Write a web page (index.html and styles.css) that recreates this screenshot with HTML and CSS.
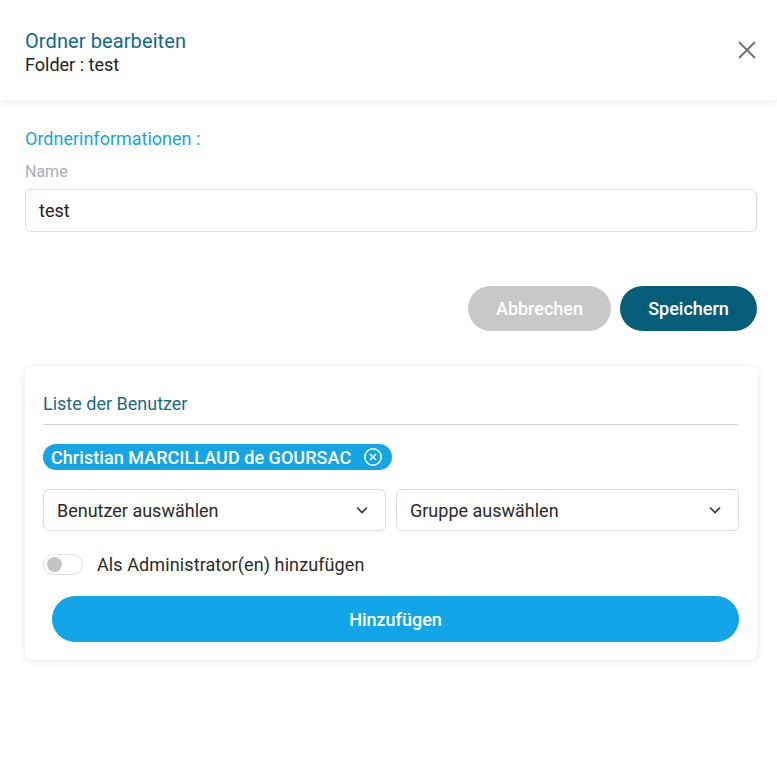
FILE: index.html
```html
<!DOCTYPE html>
<html lang="de">
<head>
<meta charset="utf-8">
<title>Ordner bearbeiten</title>
<link rel="stylesheet" href="styles.css">
</head>
<body>
<div class="modal">
  <header class="modal-header">
    <div class="titles">
      <div class="title">Ordner bearbeiten</div>
      <div class="subtitle">Folder : test</div>
    </div>
    <button class="close" aria-label="Schließen">
      <svg width="20" height="20" viewBox="0 0 20 20"><path d="M2 2L18 18M18 2L2 18" stroke="#6f6f6f" stroke-width="1.8" fill="none"/></svg>
    </button>
  </header>
  <main class="modal-body">
    <div class="section-title">Ordnerinformationen :</div>
    <label class="field-label">Name</label>
    <div class="input">test</div>
    <div class="actions">
      <button class="btn btn-cancel">Abbrechen</button>
      <button class="btn btn-save">Speichern</button>
    </div>
    <section class="card">
      <div class="card-title">Liste der Benutzer</div>
      <div class="chips">
        <span class="chip">Christian MARCILLAUD de GOURSAC
          <svg width="20" height="20" viewBox="0 0 20 20"><circle cx="10" cy="10" r="8.2" stroke="#fff" stroke-width="1.6" fill="none"/><path d="M7 7L13 13M13 7L7 13" stroke="#fff" stroke-width="1.6"/></svg>
        </span>
      </div>
      <div class="selects">
        <div class="select"><span>Benutzer auswählen</span>
          <svg width="14" height="14" viewBox="0 0 14 14"><path d="M2 4.5L7 9.5L12 4.5" stroke="#333" stroke-width="1.6" fill="none"/></svg>
        </div>
        <div class="select"><span>Gruppe auswählen</span>
          <svg width="14" height="14" viewBox="0 0 14 14"><path d="M2 4.5L7 9.5L12 4.5" stroke="#333" stroke-width="1.6" fill="none"/></svg>
        </div>
      </div>
      <div class="toggle-row">
        <span class="toggle"><span class="knob"></span></span>
        <span class="toggle-label">Als Administrator(en) hinzufügen</span>
      </div>
      <button class="btn-add">Hinzufügen</button>
    </section>
  </main>
</div>
</body>
</html>
```

FILE: styles.css
```css
* { box-sizing: border-box; }
html, body { margin: 0; padding: 0; background: #fff; }
body { font-family: Roboto, "Liberation Sans", sans-serif; color: #2a2a2a; width: 777px; min-height: 758px; }

.modal-header {
  height: 100px;
  display: flex;
  align-items: center;
  justify-content: space-between;
  padding: 0 18px 0 25px;
  box-shadow: 0 2px 8px rgba(0,0,0,0.07);
  border-radius: 0 0 4px 4px;
}
.titles { padding-top: 6px; }
.title { font-size: 20px; color: #0f6a8b; line-height: 24px; letter-spacing: 0.1px; }
.subtitle { font-size: 18px; color: #222; line-height: 24px; }
.close { background: none; border: 0; padding: 0; width: 24px; height: 24px; display: flex; align-items: center; justify-content: center; }

.modal-body { padding: 28px 20px 40px 25px; }
.section-title { font-size: 18px; color: #18a4e4; line-height: 21px; }
.field-label { display: block; font-size: 16px; color: #a6afb9; margin-top: 13px; line-height: 20px; }
.input {
  margin-top: 7px;
  height: 43px;
  border: 1px solid #dcdcdc;
  border-radius: 6px;
  padding: 0 13px;
  display: flex;
  align-items: center;
  font-size: 18px;
  color: #222;
}

.actions { display: flex; justify-content: flex-end; gap: 9px; margin-top: 54px; }
.btn { border: 0; border-radius: 23px; height: 45px; font-family: inherit; font-size: 18px; font-weight: 500; color: #fff; }
.btn-cancel { width: 143px; background: #c8c8c8; }
.btn-save { width: 137px; background: #065d7a; }

.card {
  margin-top: 35px;
  background: #fff;
  border-radius: 8px;
  box-shadow: 0 1px 8px rgba(0,0,0,0.10);
  padding: 26px 18px 18px 18px;
}
.card-title {
  font-size: 18px;
  color: #1a6a86;
  line-height: 24px;
  padding-bottom: 8px;
  border-bottom: 1px solid #d4d4d4;
}
.chips { margin-top: 19px; display: flex; }
.chip {
  display: inline-flex;
  align-items: center;
  gap: 12px;
  height: 26px;
  padding: 0 9px 0 8px;
  background: #13a5e6;
  color: #fff;
  border-radius: 13px;
  font-size: 18px;
  font-weight: 500;
  letter-spacing: 0.05px;
}
.selects { display: grid; grid-template-columns: 1fr 1fr; gap: 10px; margin-top: 19px; }
.select {
  height: 42px;
  border: 1px solid #dcdcdc;
  border-radius: 6px;
  display: flex;
  align-items: center;
  justify-content: space-between;
  padding: 0 16px 0 13px;
  font-size: 18px;
  color: #2a2a2a;
}
.toggle-row { display: flex; align-items: center; gap: 14px; margin-top: 23px; height: 21px; }
.toggle {
  width: 40px; height: 21px;
  border: 1px solid #dedede;
  border-radius: 11px;
  display: flex; align-items: center;
  padding-left: 3px;
}
.knob { width: 15px; height: 15px; border-radius: 50%; background: #c4c4c4; }
.toggle-label { font-size: 18px; color: #2a2a2a; line-height: 21px; letter-spacing: 0.1px; }
.btn-add {
  display: block;
  margin: 21px 0 0 9px;
  width: calc(100% - 9px);
  height: 46px;
  border: 0;
  border-radius: 23px;
  background: #12a5e7;
  color: #fff;
  font-family: inherit;
  font-size: 18px;
  font-weight: 500;
}
```
